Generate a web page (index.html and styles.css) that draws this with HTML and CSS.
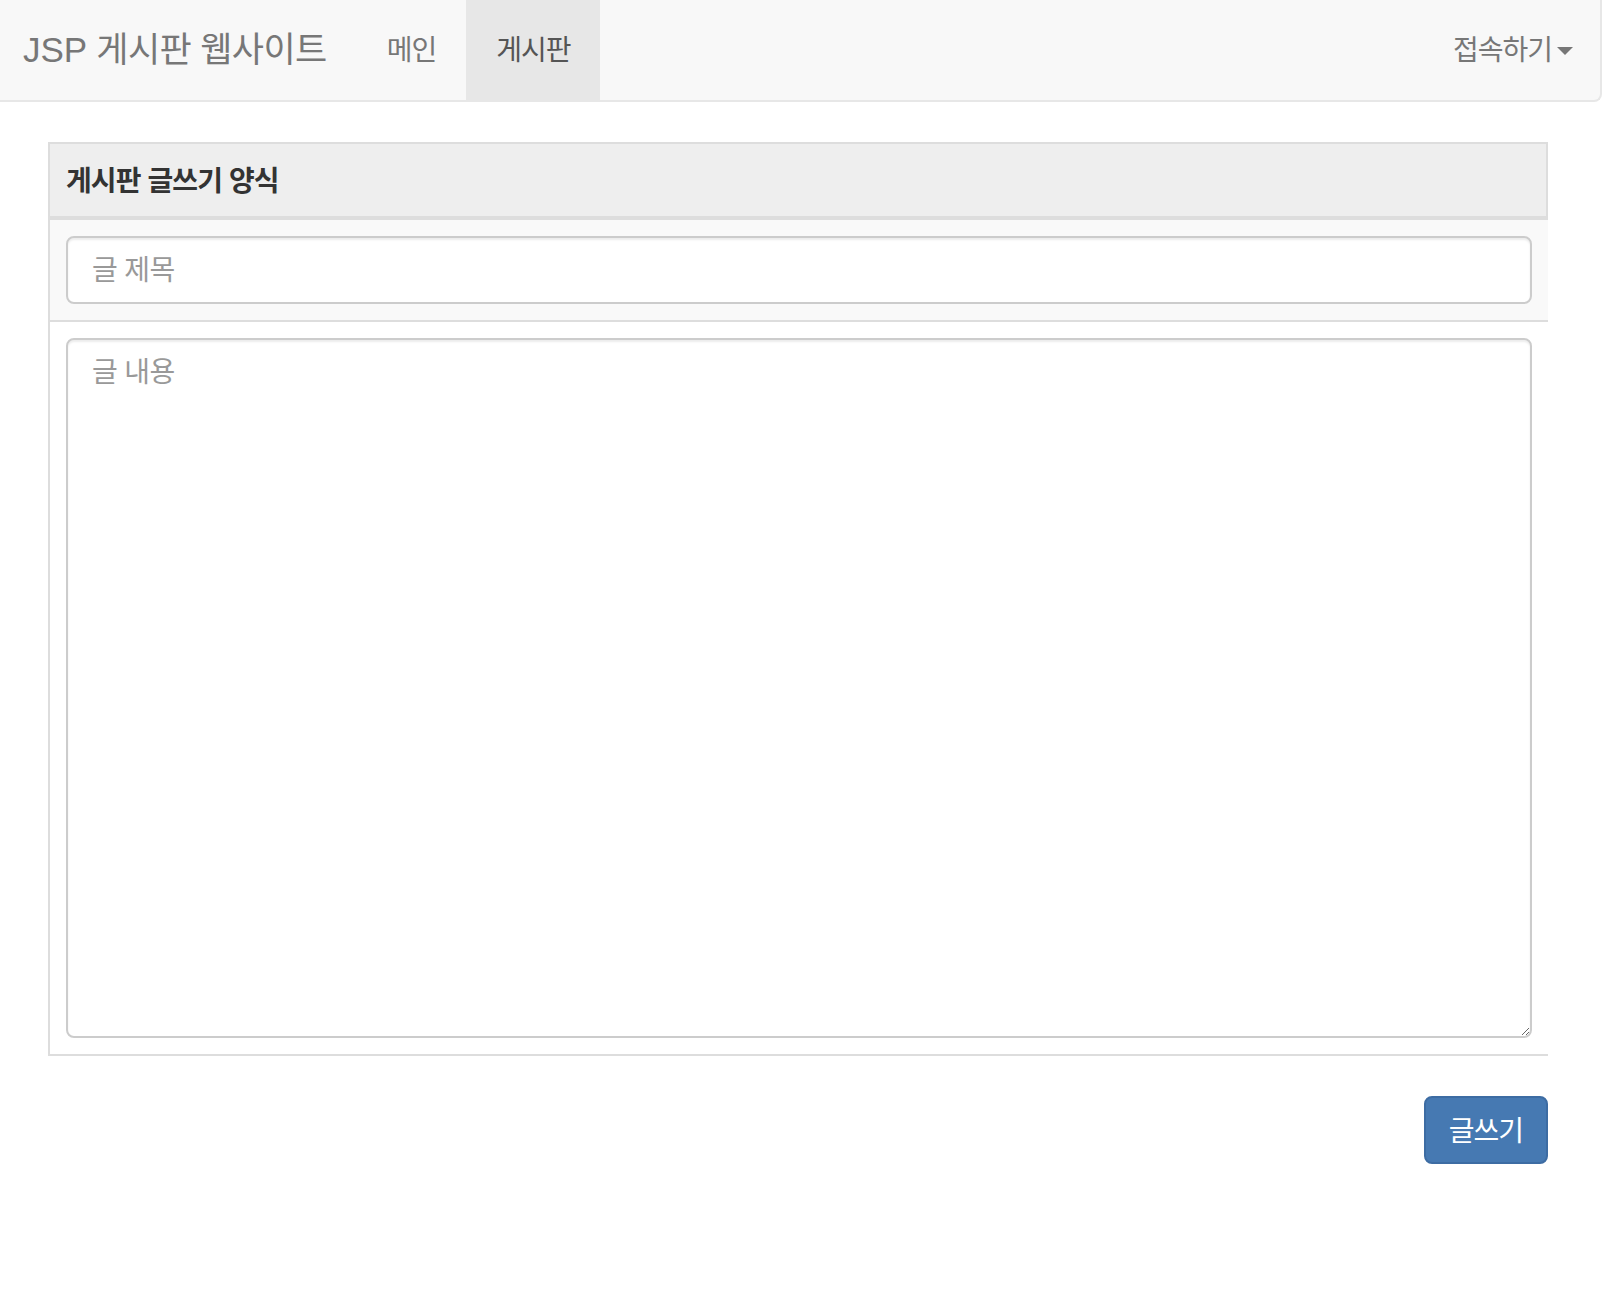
FILE: index.html
```html
<!DOCTYPE html>
<html lang="ko">
<head>
<meta charset="utf-8">
<title>JSP 게시판 웹사이트</title>
<link rel="stylesheet" href="styles.css">
</head>
<body>
<nav class="navbar">
  <a class="brand" href="#"><span class="brand-latin">JSP</span> 게시판 웹사이트</a>
  <ul class="nav">
    <li><a href="#">메인</a></li>
    <li class="active"><a href="#">게시판</a></li>
  </ul>
  <ul class="nav nav-right">
    <li><a href="#">접속하기<span class="caret"></span></a></li>
  </ul>
</nav>
<main class="container">
  <form class="write-form">
    <div class="board">
      <div class="board-head">게시판 글쓰기 양식</div>
      <div class="board-row striped">
        <input class="form-control" type="text" placeholder="글 제목">
      </div>
      <div class="board-row">
        <textarea class="form-control area" placeholder="글 내용"></textarea>
      </div>
    </div>
    <div class="actions">
      <button class="btn-primary" type="button">글쓰기</button>
    </div>
  </form>
</main>
</body>
</html>
```
FILE: styles.css
```css
* { box-sizing: border-box; }
html, body { margin: 0; padding: 0; background: #fff; }
body {
  font-family: "Liberation Sans", "Noto Sans CJK KR", sans-serif;
  color: #333;
}

.navbar {
  display: flex;
  align-items: stretch;
  height: 102px;
  background: #f8f8f8;
  border: 2px solid #e7e7e7;
  border-left: 0;
  border-top: 0;
  border-radius: 0 0 8px 0;
  margin: 0 0 40px 0;
}
.brand {
  display: block;
  padding: 30px 30px 30px 23px;
  line-height: 40px;
  font-size: 35px;
  letter-spacing: -0.6px;
  color: #777;
  text-decoration: none;
}
.brand-latin { font-size: 35px; letter-spacing: 0; }
.nav {
  display: flex;
  list-style: none;
  margin: 0;
  padding: 0;
}
.nav li { display: block; }
.nav a {
  display: block;
  padding: 31px 30px 29px;
  line-height: 40px;
  font-size: 28px;
  letter-spacing: -1px;
  color: #777;
  text-decoration: none;
}
.nav .active a { background: #e7e7e7; color: #555; }
.nav-right { margin-left: auto; }
.nav-right a { padding-right: 27px; }
.caret {
  display: inline-block;
  width: 0;
  height: 0;
  margin-left: 5px;
  vertical-align: middle;
  border-top: 8px solid #777;
  border-left: 8px solid transparent;
  border-right: 8px solid transparent;
  position: relative;
  top: -2px;
}

.container {
  width: 1500px;
  margin: 0 0 0 48px;
}
.board-head {
  background: #eee;
  border: 2px solid #ddd;
  border-bottom-width: 4px;
  padding: 18px 16px 14px;
  line-height: 40px;
  font-size: 28px;
  font-weight: bold;
  letter-spacing: -0.9px;
  color: #333;
}
.board-row {
  border-left: 2px solid #ddd;
  border-bottom: 2px solid #ddd;
  padding: 16px;
  background: #fff;
}
.board-row.striped { background: #f9f9f9; }

.form-control {
  display: block;
  width: 100%;
  height: 68px;
  padding: 13px 24px 11px;
  font-family: inherit;
  font-size: 28px;
  letter-spacing: -0.6px;
  line-height: 40px;
  color: #555;
  background: #fff;
  border: 2px solid #ccc;
  border-radius: 8px;
  box-shadow: inset 0 2px 2px rgba(0,0,0,.075);
  outline: none;
}
.form-control::placeholder { color: #999; }
.area {
  height: 700px;
  resize: vertical;
}

.actions {
  display: flex;
  justify-content: flex-end;
  margin-top: 40px;
}
.btn-primary {
  height: 68px;
  padding: 14px 23px 10px;
  font-family: inherit;
  font-size: 28px;
  letter-spacing: -1px;
  line-height: 40px;
  color: #fff;
  background: #4679b2;
  border: 2px solid #3d6ca3;
  border-radius: 8px;
  cursor: pointer;
}
```
